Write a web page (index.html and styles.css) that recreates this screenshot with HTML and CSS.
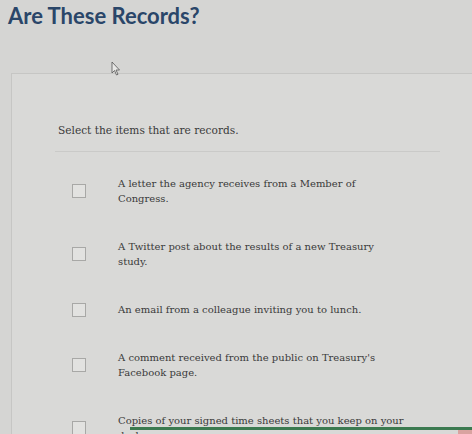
FILE: index.html
```html
<!DOCTYPE html>
<html>
<head>
<meta charset="utf-8">
<link rel="stylesheet" href="styles.css">
</head>
<body>
<h1 class="title">Are These Records?</h1>
<svg class="cursor" width="10" height="15" viewBox="0 0 10 15"><path d="M1 1 L1 12 L3.5 9.5 L5.5 14 L7 13.3 L5 9 L8.5 9 Z" fill="#e8e8e6" stroke="#555" stroke-width="0.8"/></svg>
<div class="card">
  <p class="prompt">Select the items that are records.</p>
  <div class="rule"></div>
  <ul class="items">
    <li class="item"><span class="box"></span><span class="label">A letter the agency receives from a Member of Congress.</span></li>
    <li class="item"><span class="box"></span><span class="label">A Twitter post about the results of a new Treasury study.</span></li>
    <li class="item"><span class="box"></span><span class="label">An email from a colleague inviting you to lunch.</span></li>
    <li class="item"><span class="box"></span><span class="label">A comment received from the public on Treasury's Facebook page.</span></li>
    <li class="item"><span class="box"></span><span class="label">Copies of your signed time sheets that you keep on your desk.</span></li>
  </ul>
</div>
<div class="bar"></div>
<div class="corner"></div>
</body>
</html>
```
FILE: styles.css
```css
html, body {
  margin: 0;
  padding: 0;
  width: 472px;
  height: 434px;
  overflow: hidden;
  background: #d5d5d3;
}
body {
  position: relative;
}
.title {
  margin: 0;
  padding: 4px 0 0 8px;
  font-family: Lato, sans-serif;
  font-weight: 700;
  font-size: 22px;
  line-height: 24px;
  color: #2a4669;
}
.cursor {
  position: absolute;
  left: 111px;
  top: 61px;
}
.card {
  margin: 45px -20px 0 11px;
  border-top: 1px solid #c6c6c4;
  border-left: 1px solid #c6c6c4;
  background: #d9d9d7;
  padding: 49px 0 0 46px;
  font-family: "DejaVu Serif", serif;
  color: #3a3a3a;
}
.prompt {
  margin: 0;
  font-size: 10.6px;
  line-height: 15px;
}
.rule {
  margin: 13px 52px 0 -3px;
  border-top: 1px solid #cacac8;
}
.items {
  list-style: none;
  margin: 0;
  padding: 24px 0 0 0;
}
.item {
  display: flex;
  align-items: center;
  margin-bottom: 33px;
}
.box {
  flex: none;
  width: 12px;
  height: 12px;
  border: 1px solid #a8a8a6;
  background: #e2e2e0;
  margin: 0 32px 0 14px;
}
.label {
  width: 287px;
  font-size: 10px;
  line-height: 15px;
  color: #3a3a3a;
}
.bar {
  position: absolute;
  left: 130px;
  right: 0;
  top: 427px;
  height: 3px;
  background: #3b7a50;
}
.corner {
  position: absolute;
  right: 0;
  top: 430px;
  width: 14px;
  height: 4px;
  background: #d9a3a0;
}
```
